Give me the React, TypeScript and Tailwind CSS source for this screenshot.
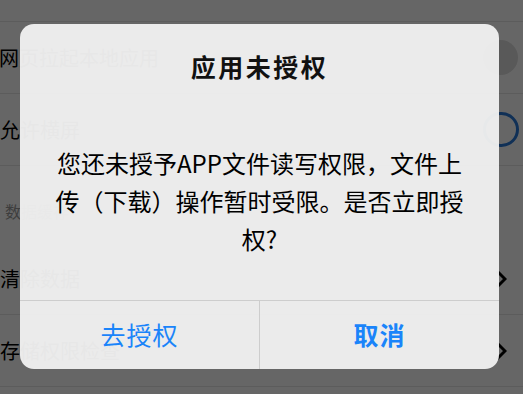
import React from 'react';

const font = { fontFamily: '"Noto Sans CJK SC", "Noto Sans", sans-serif' };

function Chevron() {
  return (
    <svg width="12" height="20" viewBox="0 0 12 20" className="shrink-0">
      <path d="M2 2 L10 10 L2 18" fill="none" stroke="#000" strokeWidth="3" />
    </svg>
  );
}

function Row({ label, right }: { label: string; right?: React.ReactNode }) {
  return (
    <div className="flex h-[72px] items-center justify-between border-b border-[#e6e6e6] bg-white pr-[16px]">
      <span className="text-[20px] text-black">{label}</span>
      {right}
    </div>
  );
}

export default function App() {
  return (
    <div className="relative h-[394px] w-[523px] overflow-hidden bg-white" style={font}>
      {/* page underneath */}
      <div className="flex flex-col">
        <div className="h-[22px] border-b border-[#e6e6e6] bg-white" />
        <div className="flex h-[72px] items-center justify-between border-b border-[#e6e6e6] bg-white pr-[5px]">
          <span className="-ml-[1px] text-[20px] text-black">网页拉起本地应用</span>
          <div className="h-[35px] w-[35px] rounded-full bg-[#dedede]" />
        </div>
        <div className="flex h-[72px] items-center justify-between border-b border-[#e6e6e6] bg-white pr-[4px]">
          <span className="text-[20px] text-black">允许横屏</span>
          <div className="h-[35px] w-[36px] rounded-full border-[3px] border-[#2a78d8] bg-white" />
        </div>
        <div className="flex h-[77px] items-end bg-white pb-[20px] pl-[5px]">
          <span className="text-[16px] text-[#9a9a9a]">数据缓存</span>
        </div>
        <Row label="清除数据" right={<Chevron />} />
        <Row label="存储权限检查" right={<Chevron />} />
      </div>

      {/* overlay + alert */}
      <div className="absolute inset-0 bg-black/60 pl-[20px] pt-[24px]">
        <div className="flex h-[345px] w-[479px] flex-col overflow-hidden rounded-[14px] bg-[rgba(240,240,240,0.96)] text-center">
          <div className="pt-[24px] text-[25px] font-bold leading-[36px] tracking-[2.5px] text-[#111]">
            应用未授权
          </div>
          <div className="mt-[60px] flex-1 px-[20px] text-[24px] leading-[38px] text-black">
            您还未授予APP文件读写权限，文件上
            <br />
            传（下载）操作暂时受限。是否立即授
            <br />
            权?
          </div>
          <div className="flex h-[69px] border-t border-[#cdcdcd]">
            <button className="flex flex-1 items-center justify-center border-r border-[#cdcdcd] text-[25px] tracking-[1px] text-[#1a84fa]">
              去授权
            </button>
            <button className="flex flex-1 items-center justify-center text-[25px] font-bold tracking-[1px] text-[#1a84fa]">
              取消
            </button>
          </div>
        </div>
      </div>
    </div>
  );
}
